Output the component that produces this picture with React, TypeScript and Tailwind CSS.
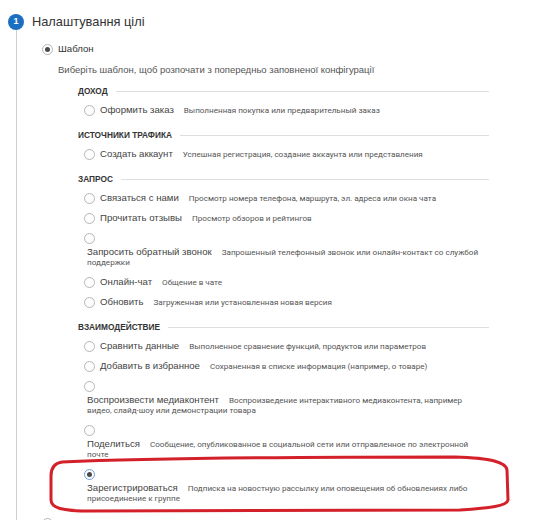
import React from 'react';

type Opt = {
  label: string;
  desc?: string;
  // when the text wraps under the radio: line 1 of description, and line 2
  wrap?: [string, string];
  checked?: boolean;
};

type Group = { title: string; items: Opt[] };

const groups: Group[] = [
  { title: 'Доход', items: [{ label: 'Оформить заказ', desc: 'Выполненная покупка или предварительный заказ' }] },
  {
    title: 'Источники трафика',
    items: [{ label: 'Создать аккаунт', desc: 'Успешная регистрация, создание аккаунта или представления' }],
  },
  {
    title: 'Запрос',
    items: [
      { label: 'Связаться с нами', desc: 'Просмотр номера телефона, маршрута, эл. адреса или окна чата' },
      { label: 'Прочитать отзывы', desc: 'Просмотр обзоров и рейтингов' },
      {
        label: 'Запросить обратный звонок',
        wrap: ['Запрошенный телефонный звонок или онлайн-контакт со службой', 'поддержки'],
      },
      { label: 'Онлайн-чат', desc: 'Общение в чате' },
      { label: 'Обновить', desc: 'Загруженная или установленная новая версия' },
    ],
  },
  {
    title: 'Взаимодействие',
    items: [
      { label: 'Сравнить данные', desc: 'Выполненное сравнение функций, продуктов или параметров' },
      { label: 'Добавить в избранное', desc: 'Сохраненная в списке информация (например, о товаре)' },
      {
        label: 'Воспроизвести медиаконтент',
        wrap: ['Воспроизведение интерактивного медиаконтента, например', 'видео, слайд-шоу или демонстрации товара'],
      },
      {
        label: 'Поделиться',
        wrap: ['Сообщение, опубликованное в социальной сети или отправленное по электронной', 'почте'],
      },
      {
        label: 'Зарегистрироваться',
        wrap: ['Подписка на новостную рассылку или оповещения об обновлениях либо', 'присоединение к группе'],
        checked: true,
      },
    ],
  },
];

function Radio({ checked, blue }: { checked?: boolean; blue?: boolean }) {
  return (
    <span
      className={`flex h-[11px] w-[11px] shrink-0 items-center justify-center rounded-full border bg-white ${
        blue ? 'border-[#6f9fd8]' : 'border-[#b5b5b5]'
      }`}
    >
      {checked && <span className="h-[5px] w-[5px] rounded-full bg-[#4a4a4a]" />}
    </span>
  );
}

function Option({ o }: { o: Opt }) {
  if (o.wrap) {
    return (
      <div className="pt-[3px] pb-[4px]">
        <div className="flex h-[14px] items-center pl-[6px]">
          <Radio checked={o.checked} blue={o.checked} />
        </div>
        <div className="mt-[1px] pl-[9px] text-[9.6px] leading-[11px] whitespace-nowrap">
          <div className="h-[11px]">
            <span className="text-[9.6px] leading-[11px] text-[#444]">{o.label}</span>
            <span className="ml-[10px] font-['Roboto'] text-[8.1px] leading-[11px] text-[#555]">{o.wrap[0]}</span>
          </div>
          <div className="h-[11px] font-['Roboto'] text-[8.1px] leading-[11px] text-[#555]">{o.wrap[1]}</div>
        </div>
      </div>
    );
  }
  return (
    <div className="flex h-5 items-center pl-[6px] whitespace-nowrap">
      <Radio />
      <span className="ml-[5px] text-[9.6px] leading-3 text-[#444]">{o.label}</span>
      <span className="ml-[10px] font-['Roboto'] text-[8.1px] leading-3 text-[#555]">{o.desc}</span>
    </div>
  );
}

export default function App() {
  return (
    <div className="relative h-[520px] w-[546px] overflow-hidden bg-white font-['Liberation_Sans',Arial,sans-serif]">
      <div className="flex h-full pt-[14px] pl-[8px]">
        {/* step marker */}
        <div className="flex w-4 flex-col items-center">
          <div className="flex h-4 w-4 items-center justify-center rounded-full bg-[#1c6fc0] text-[9px] font-bold text-white">
            1
          </div>
          <div className="w-px flex-1 bg-[#cfcfcf]" />
        </div>

        <div className="ml-[8px] flex-1">
          <div className="h-4 text-[12.8px] leading-4 text-[#333]">Налаштування цілі</div>

          <div className="mt-[12px] flex h-[14px] items-center pl-[10px]">
            <Radio checked />
            <span className="ml-[5px] text-[9.6px] text-[#333]">Шаблон</span>
          </div>

          <div className="mt-[8px] pl-[26px] text-[9.5px] leading-3 text-[#555]">
            Виберіть шаблон, щоб розпочати з попередньо заповненої конфігурації
          </div>

          <div className="mt-[8px] w-[457px] pl-[46px]">
            {groups.map((g) => (
              <div key={g.title} className="mb-[8px]">
                <div className="flex h-[14px] items-center">
                  <span className="text-[8.3px] font-bold uppercase text-[#333]">{g.title}</span>
                  <span className="ml-[8px] h-px flex-1 bg-[#dedede]" />
                </div>
                <div className="mt-[2px]">
                  {g.items.map((o) => (
                    <Option key={o.label} o={o} />
                  ))}
                </div>
              </div>
            ))}
          </div>

          {/* next template choice, cut off by the bottom edge */}
          <div className="mt-[4px] flex h-[14px] items-center pl-[10px]">
            <Radio />
          </div>
        </div>
      </div>

      {/* red annotation */}
      <svg className="pointer-events-none absolute top-0 left-0" width="546" height="520">
        <path
          d="M 62 462 C 150 458, 320 457, 455 457 C 492 458, 506 462, 507 470 L 508 500 C 507 506, 490 508, 460 510 L 90 511 C 62 511, 51 508, 51 500 L 51 476 C 51 467, 55 463, 62 462 Z"
          fill="none"
          stroke="#d3202b"
          strokeWidth="3"
        />
      </svg>
    </div>
  );
}
